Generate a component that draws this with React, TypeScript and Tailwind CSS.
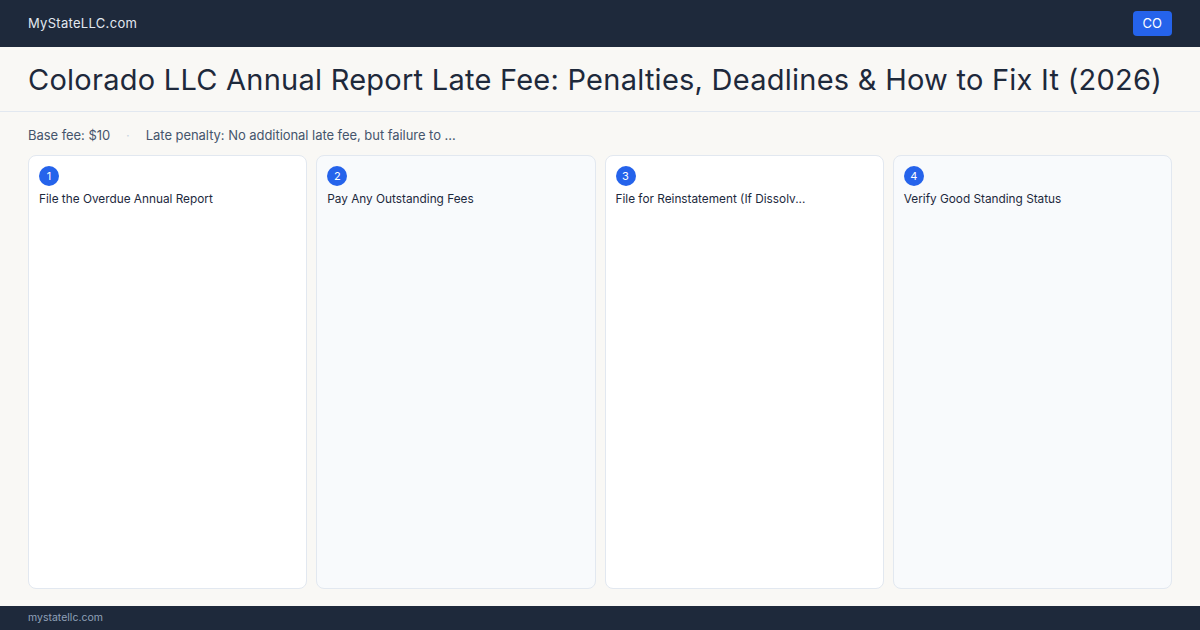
const steps = [
  "File the Overdue Annual Report",
  "Pay Any Outstanding Fees",
  "File for Reinstatement (If Dissolv...",
  "Verify Good Standing Status",
];

export default function App() {
  return (
    <div className="flex h-[630px] w-[1200px] flex-col overflow-hidden bg-[#f9f8f5] font-['Inter',sans-serif]">
      <header className="flex h-[47px] shrink-0 items-center justify-between bg-[#1e293b] px-7">
        <span className="text-[13px] tracking-[0.3px] text-slate-200">MyStateLLC.com</span>
        <span className="rounded bg-[#2563eb] px-[10px] py-[3px] text-[13px] text-white">CO</span>
      </header>

      <div className="flex h-[65px] shrink-0 items-center border-b border-slate-200 px-7 pt-[2px]">
        <h1 className="text-[29px] tracking-[0.25px] text-[#1e293b]">
          Colorado LLC Annual Report Late Fee: Penalties, Deadlines &amp; How to Fix It (2026)
        </h1>
      </div>

      <main className="flex min-h-0 flex-1 flex-col px-7 pt-4 pb-[17px]">
        <div className="flex h-4 items-center gap-4 text-[13px] tracking-[-0.05px] text-slate-600">
          <span>Base fee: $10</span>
          <span className="text-slate-300">·</span>
          <span>Late penalty: No additional late fee, but failure to ...</span>
        </div>

        <div className="mt-[11px] grid min-h-0 flex-1 grid-cols-4 gap-[9px]">
          {steps.map((s, i) => (
            <div
              key={i}
              className={`rounded-lg border border-slate-200 p-[10px] ${i % 2 === 0 ? "bg-white" : "bg-slate-50"}`}
            >
              <div className="flex h-5 w-5 items-center justify-center rounded-full bg-[#2563eb] text-[11px] text-white">
                {i + 1}
              </div>
              <p className="mt-[5px] text-[11.8px] leading-4 text-slate-800">{s}</p>
            </div>
          ))}
        </div>
      </main>

      <footer className="flex h-6 shrink-0 items-center bg-[#1e293b] px-7 text-[10.5px] text-slate-400">
        mystatellc.com
      </footer>
    </div>
  );
}
